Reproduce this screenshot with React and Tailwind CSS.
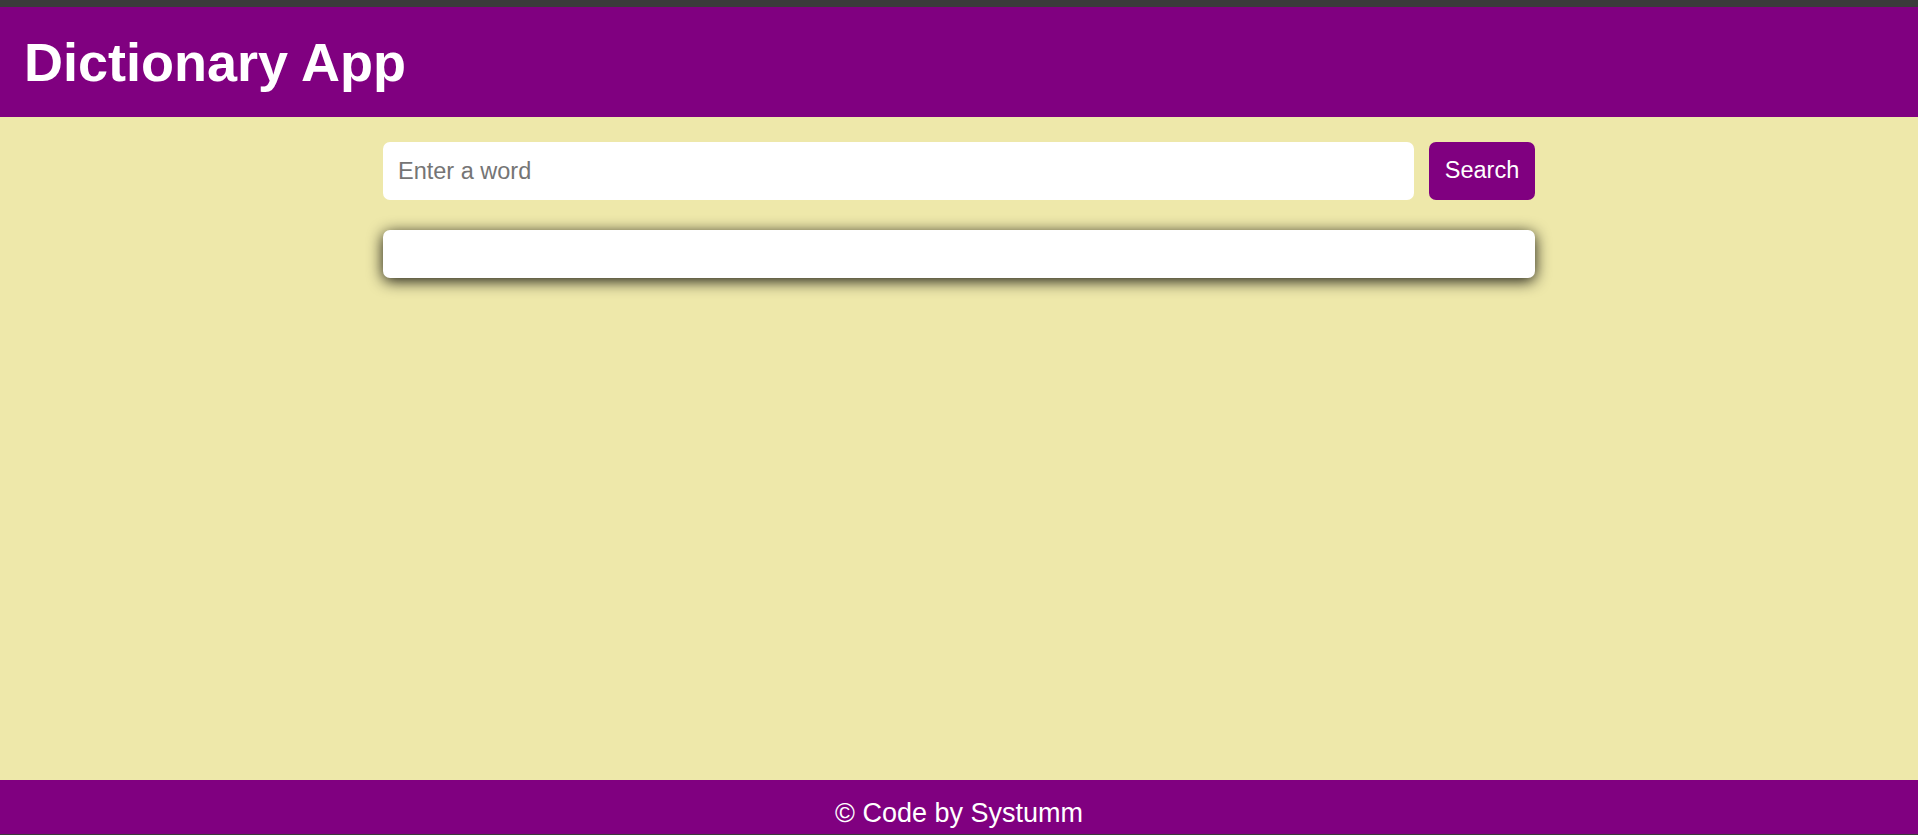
import { useState } from 'react';

export default function App() {
  const [word, setWord] = useState('');

  return (
    <div
      className="h-screen overflow-hidden flex flex-col bg-[#eee8aa]"
      style={{ fontFamily: '"Liberation Sans", Arial, sans-serif' }}
    >
      <div className="h-[7px] bg-[#3b3b3b] shrink-0" />

      <header className="h-[110px] shrink-0 bg-[#800080] flex items-center px-[24px]">
        <h1 className="text-white font-bold text-[54px] leading-none">Dictionary App</h1>
      </header>

      <main className="flex-1">
        <div className="w-[1152px] mx-auto pt-[25px]">
          <div className="flex gap-[15px]">
            <input
              type="text"
              value={word}
              onChange={(e) => setWord(e.target.value)}
              placeholder="Enter a word"
              className="flex-1 h-[58px] bg-white rounded-[7px] px-[15px] text-[23.5px] text-black placeholder:text-[#757575] outline-none"
            />
            <button className="w-[106px] h-[58px] bg-[#800080] text-white rounded-[7px] text-[23.5px]">
              Search
            </button>
          </div>

          <div className="mt-[30px] h-[48px] bg-white rounded-[7px] shadow-[0_3px_15px_rgba(0,0,0,0.9)]" />
        </div>
      </main>

      <footer className="h-[54px] shrink-0 bg-[#800080] flex justify-center pt-[18px] overflow-hidden">
        <p className="text-white text-[27px] leading-[31px]">© Code by Systumm</p>
      </footer>
      <div className="h-px bg-[#3b3b3b] shrink-0" />
    </div>
  );
}
